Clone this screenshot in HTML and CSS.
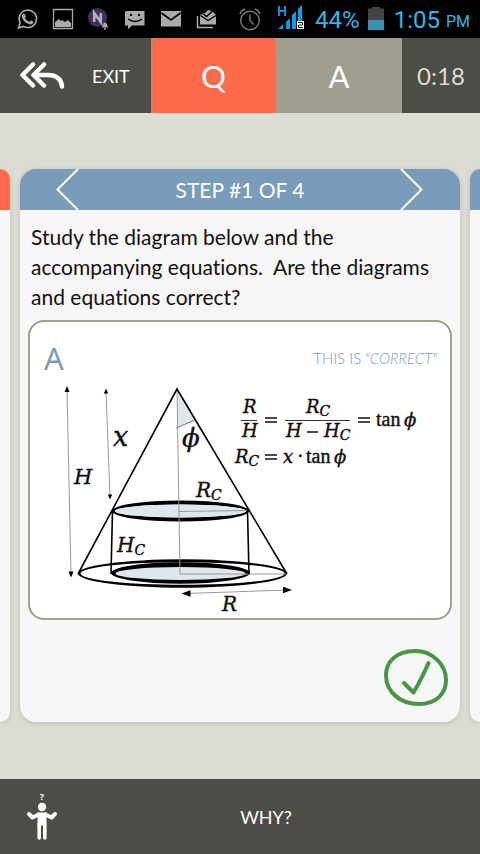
FILE: index.html
```html
<!DOCTYPE html>
<html lang="en">
<head>
<meta charset="utf-8">
<meta name="viewport" content="width=device-width, initial-scale=1">
<title>Step #1 of 4</title>
<link rel="stylesheet" href="styles.css">
</head>
<body>
<div class="status">
  <div class="notices">
    <svg class="notice" viewBox="0 0 36 38" aria-hidden="true"><path d="M9.500 28l1.600-5.200A8.700 8.700 0 1 1 14.600 26.400z" fill="none" stroke="#aaa" stroke-width="1.600"/><path d="M13.500 14.500c1.500-1.800 2.300-.8 3.300 1.700.3.800-1 1.500-.8 1.900 1 1.900 2.300 3 4.100 3.700.5.200 1.300-1.500 1.800-1.400 1 .3 2.400 1 2.500 1.500.1 1.500-1.800 2.700-3.300 2.500-3.900-.5-8-4.600-8.300-7.800-.1-.9.200-1.600.7-2.100z" fill="#aaa"/></svg>
    <svg class="notice" viewBox="0 0 36 38" aria-hidden="true"><path d="M8.500 9.500h19v19h-19z" fill="none" stroke="#aaa" stroke-width="1.300"/><path d="M10 27v-5l4-3 2 2 1-1 3 2 3-2 3 3v4z" fill="#aaa"/></svg>
    <svg class="notice" viewBox="0 0 36 38" aria-hidden="true"><circle cx="16.500" cy="17.500" r="9.600" fill="#3d2f57"/><path d="M13.200 22v-9l6.600 9v-9" fill="none" stroke="#b5b0bd" stroke-width="2.600"/><path d="M24 22.500c2 .3 2.300 2 2.300 3.300l1.200 1.700h-7l1.200-1.700c0-1.300.3-3 2.300-3.300zM23 28h2v1.500h-2z" fill="#aaa"/></svg>
    <svg class="notice" viewBox="0 0 36 38" aria-hidden="true"><path d="M9 11h18.500v14.500H15l-4 3.700v-3.700H8V12z" fill="#aaa"/><path d="M13 14h2v2h-2zM21 14h2v2h-2z" fill="#000"/><path d="M11 19q7 5 14 0" fill="none" stroke="#000" stroke-width="1.500"/></svg>
    <svg class="notice" viewBox="0 0 36 38" aria-hidden="true"><path d="M8 11h20v15.500H8z" fill="#aaa"/><path d="M8.500 13l9.500 7 9.500-7" fill="none" stroke="#000" stroke-width="1.700"/></svg>
    <svg class="notice" viewBox="0 0 36 38" aria-hidden="true"><path d="M8.500 16v11.500H24" fill="none" stroke="#aaa" stroke-width="1.500"/><path d="M11 15l5-2 3-3 4 1 4 4v9.500H11z" fill="#aaa"/><path d="M11.500 15.500l7.500 5 8-5M14.500 14l3 2.500 6-5.500" fill="none" stroke="#000" stroke-width="1.400"/></svg>
  </div>
  <div class="system">
    <svg class="alarm" viewBox="0 0 24 38" aria-hidden="true"><g fill="none" stroke="#777" stroke-width="1.500"><circle cx="11" cy="20.500" r="9.300"/><path d="M11 14.500v6l3.500 4M1 14q1-3.500 5-5M16 9q4 1.500 5 5"/></g></svg>
    <svg class="signal" viewBox="0 0 27 38" aria-hidden="true"><path d="M1 6v10M7 6v10M1 11h6" stroke="#0b8fdc" stroke-width="2"/><path d="M0 29l5-5v5zM8 22l4-4v11H8zM14 15l4-4v18h-4zM20 9l4-4v24h-4z" fill="#0b9cea"/><path d="M19 21h7v8h-7z" fill="#fff"/><path d="M20 22.500h4.500v2.500h-4v2.500H25" fill="none" stroke="#111" stroke-width="1"/></svg>
    <span class="charge">44%</span>
    <svg class="battery" viewBox="0 0 16 38" aria-hidden="true"><path d="M0 8.500h4V7h8v1.500h4V20H0z" fill="#444"/><path d="M0 20h16v10H0z" fill="#3b91b5"/></svg>
    <span class="clock">1:05</span><span class="meridiem">PM</span>
  </div>
</div>
<header class="topbar">
  <button class="exit" type="button">
    <svg class="back" viewBox="0 0 46 28" aria-hidden="true"><g fill="none" stroke="#fff" stroke-width="4.500" stroke-linecap="round" stroke-linejoin="round"><path d="M14 2.500L3.500 13 14 23.500M25 2.500L14.500 13 25 23.500M15 13h13Q42 13 43 24.500"/></g></svg>
    <span>EXIT</span>
  </button>
  <button class="tab question" type="button">Q</button>
  <button class="tab answer" type="button">A</button>
  <div class="timer">0:18</div>
</header>
<main class="deck">
  <div class="card previous"><div class="card-head"></div></div>
  <section class="card current">
    <div class="card-head">
      <button class="arrow" type="button" aria-label="Previous step"><svg viewBox="0 0 24 41" aria-hidden="true"><path d="M22 0L1.500 20.500 22 41" fill="none" stroke="#fff" stroke-width="2"/></svg></button>
      <h1>STEP #1 OF 4</h1>
      <button class="arrow" type="button" aria-label="Next step"><svg viewBox="0 0 24 41" aria-hidden="true"><path d="M1 0l20.500 20.500L1 41" fill="none" stroke="#fff" stroke-width="2"/></svg></button>
    </div>
    <p class="prompt">Study the diagram below and the accompanying equations.&nbsp; Are the diagrams and equations correct?</p>
    <figure class="figure">
      <figcaption><span class="letter">A</span><span class="verdict">THIS IS<i> "CORRECT"</i></span></figcaption>
      <svg class="diagram" viewBox="30 376 420 242" role="img" aria-label="Cylinder inscribed in a cone">
        <path d="M178 391l17 29-17 7z" fill="#dfe7ed"/>
        <path class="cut" d="M176 428l19-8"/>
        <path fill-rule="evenodd" d="M112 511a68.500 10.500 0 0 1 137 0a68.500 10.500 0 0 1-137 0zM115 511a65.500 6.500 0 0 0 131 0a65.500 6.500 0 0 0-131 0z"/>
        <ellipse cx="180.500" cy="511" rx="65.500" ry="6.500" fill="#dfe7ed"/>
        <path fill-rule="evenodd" d="M78 573.500a104.500 14.200 0 0 1 209 0a104.500 14.200 0 0 1-209 0zM80.500 573.500a102 11.300 0 0 0 204 0a102 11.300 0 0 0-204 0z"/>
        <ellipse cx="180.500" cy="573" rx="69.500" ry="10.700"/>
        <ellipse cx="180.500" cy="573.500" rx="65" ry="6.500" fill="#dfe7ed"/>
        <path class="guide" d="M177 390l3 184h107M179 511.500l68-1M67 390l4 184M106 392l4 104M186 593.500l102-3.500"/>
        <path class="edge" d="M78 574l99-185 110 185M112.500 511l-1.500 63M247.500 511l1.500 63"/>
        <path d="M67 386l2.500 6h-5zM71 577.500l-2.500-6h5zM106 388.500l2.200 5h-4.400zM110 499.500l-2.200-5h4.400zM181.500 593.500l9-3.200v6.400zM292 590l-9-3.200v6.400z"/>
        <g class="math">
          <text class="x-big" x="113" y="446">x</text>
          <text class="h-big" x="74" y="484">H</text>
          <text class="phi-big" x="182" y="447">ϕ</text>
          <text class="label" x="196" y="497">R<tspan class="sub" dy="3">C</tspan></text>
          <text class="label" x="117" y="552">H<tspan class="sub" dy="3">C</tspan></text>
          <text class="label" x="222" y="611">R</text>
          <text x="243" y="413">R</text>
          <text x="242" y="437">H</text>
          <text x="306" y="413">R<tspan class="sub" dy="3">C</tspan></text>
          <text x="286" y="437">H</text>
          <text x="324" y="437">H<tspan class="sub" dy="3">C</tspan></text>
          <text class="roman" x="376" y="426">tan</text>
          <text class="phi" x="404" y="426">ϕ</text>
          <text x="235" y="463">R<tspan class="sub" dy="3">C</tspan></text>
          <text x="283" y="463">x</text>
          <text class="roman" x="297" y="463">·</text>
          <text class="roman" x="306" y="463">tan</text>
          <text class="phi" x="334" y="463">ϕ</text>
        </g>
        <path class="bar" d="M241 420.500h16M285 420.500h65"/>
        <path class="sign" d="M265 418h12M265 422h12M358 418h12M358 422h12M307 432h11M265 455h12M265 459h12"/>
      </svg>
    </figure>
    <button class="confirm" type="button" aria-label="Correct"><svg viewBox="0 0 64 58" aria-hidden="true"><g fill="none" stroke="#469646" stroke-width="4" stroke-linecap="round" stroke-linejoin="round"><path d="M31 2C12 2 2 13 2 26C2 43 16 55 35 55C53 55 62 44 62 31C62 16 49 2 31 2Z"/><path d="M20 34l9.500 9.500Q37 31 44.500 14"/></g></svg></button>
  </section>
  <div class="card next"><div class="card-head"></div></div>
</main>
<footer class="bottombar">
  <svg class="person" viewBox="0 -5 32 60" aria-hidden="true"><text x="16" y="8" text-anchor="middle">?</text><circle cx="16" cy="15" r="4.200" fill="#fff"/><path d="M11.500 20.500h9v13h-9z" fill="#fff"/><path d="M12.500 22.500l-6 3L3 22M19.500 22.500l6 3L29 22" fill="none" stroke="#fff" stroke-width="4" stroke-linecap="round" stroke-linejoin="round"/><path d="M13.200 32v14M18.800 32v14" stroke="#fff" stroke-width="3.600" stroke-linecap="round"/></svg>
  <button class="why" type="button">WHY?</button>
</footer>
</body>
</html>
```
FILE: styles.css
```css
* { box-sizing: border-box; }
body {
  margin: 0;
  min-height: 100vh;
  display: flex;
  flex-direction: column;
  background: #dcdcd4;
  font-family: Lato, "Liberation Sans", sans-serif;
}
button {
  margin: 0;
  padding: 0;
  border: 0;
  background: none;
  color: inherit;
  font: inherit;
}
svg { display: block; }

.status {
  display: flex;
  justify-content: space-between;
  height: 38px;
  padding: 0 10px 0 9px;
  background: #000;
  color: #33b5e5;
  font-family: Roboto, sans-serif;
  font-size: 24px;
  line-height: 40px;
}
.notices, .system { display: flex; }
.notice { width: 36px; height: 38px; }
.alarm { width: 24px; height: 38px; margin-right: 15px; }
.signal { width: 27px; height: 38px; margin-right: 10px; }
.battery { width: 16px; height: 38px; margin: 0 10px 0 8px; }
.meridiem { margin-left: 6px; font-size: 16px; line-height: 44px; }

.topbar {
  display: grid;
  grid-template-columns: 151fr 125fr 126fr 78fr;
  height: 75px;
  background: #4c4d46;
  color: #fff;
}
.exit {
  display: flex;
  align-items: center;
  gap: 27px;
  padding-left: 19px;
  font-size: 18px;
}
.back { width: 46px; height: 28px; }
.tab { font-size: 31px; }
.question { background: #ff6a4a; }
.answer { background: #a09e8e; }
.timer {
  display: flex;
  align-items: center;
  justify-content: center;
  color: #dcdcd4;
  font-size: 24px;
}

.deck {
  flex: 1;
  display: grid;
  grid-template-columns: 10px 1fr 10px;
  gap: 10px;
  padding: 56px 0 57px;
}
.card {
  display: flex;
  flex-direction: column;
  overflow: hidden;
  border-radius: 16px;
  background: #f7f7f7;
  box-shadow: 0 1px 5px rgba(0, 0, 0, 0.15);
}
.card-head {
  display: flex;
  align-items: center;
  justify-content: space-between;
  flex: none;
  height: 41px;
  padding: 0 36px;
  background: #789cba;
  color: #fff;
}
.previous { border-radius: 0 16px 16px 0; }
.previous .card-head { padding: 0; background: #ff6a4a; }
.next { border-radius: 16px 0 0 16px; }
.next .card-head { padding: 0; }
.card-head h1 { margin: 0; font-size: 21px; font-weight: 400; }
.arrow svg { width: 24px; height: 41px; }

.prompt {
  margin: 12px 11px 8px;
  color: #111;
  font-size: 21px;
  font-variant-ligatures: none;
  line-height: 30px;
}

.figure {
  margin: 0 8px;
  border: 2px solid #a09e8e;
  border-radius: 16px;
  background: #fff;
}
.figure figcaption {
  display: flex;
  align-items: center;
  justify-content: space-between;
  height: 54px;
  padding: 18px 13px 0 14px;
  color: #789cba;
}
.letter { font-family: "Noto Sans", sans-serif; font-size: 31px; }
.verdict { font-size: 15px; font-weight: 300; }
.diagram { width: 100%; height: auto; }
.guide { fill: none; stroke: #999; stroke-width: 1; }
.cut { stroke: #777; stroke-width: 1; }
.edge { fill: none; stroke: #000; stroke-width: 1.6; }
.bar { stroke: #333; stroke-width: 1; }
.sign { stroke: #111; stroke-width: 1.5; }
.math {
  fill: #111;
  stroke: #111;
  stroke-width: 0.4;
  font-family: "DejaVu Serif", serif;
  font-size: 18px;
  font-style: italic;
}
.math .roman {
  font-family: "Liberation Serif", serif;
  font-size: 20px;
  font-style: normal;
}
.math .sub { font-size: 14px; }
.math .label { font-size: 20px; }
.math .h-big { font-size: 21px; }
.math .x-big { font-size: 27px; }
.math .phi-big { font-size: 26px; }

.confirm { align-self: flex-end; margin: auto 12px 15px 0; }
.confirm svg { width: 64px; height: 58px; }

.bottombar {
  display: grid;
  grid-template-columns: 1fr auto 1fr;
  align-items: center;
  height: 75px;
  padding: 0 26px;
  background: #4c4d46;
  color: #fff;
  font-size: 18px;
}
.person { width: 32px; height: 60px; }
.person text {
  fill: #fff;
  font-family: "Open Sans", sans-serif;
  font-size: 9px;
  font-weight: 700;
}
.why { margin-left: 52px; }
```
